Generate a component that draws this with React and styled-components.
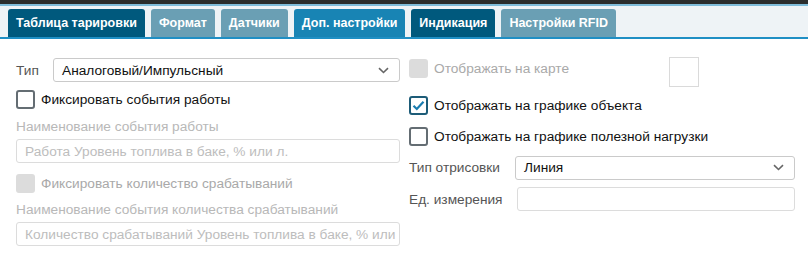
import React from "react";
import styled, { createGlobalStyle } from "styled-components";

const GlobalStyle = createGlobalStyle`
  body {
    margin: 0;
    background: #fff;
    font-family: "Liberation Sans", Arial, sans-serif;
    font-size: 13.7px;
  }
`;

const tabColors = {
  active: "#00597d",
  muted: "#6a9fb4",
  bright: "#1884b4",
};

const Page = styled.div`
  width: 808px;
  height: 258px;
  overflow: hidden;
`;

const TopBar = styled.div`
  height: 4px;
  background: #2b2d2c;
`;

const TabStrip = styled.div`
  display: flex;
  align-items: flex-end;
  gap: 6px;
  padding: 3px 8px 0;
  height: 28px;
  background: #eef3f6;
  border-top: 2px solid #7fbcd9;
  border-bottom: 2px solid #1f8fc4;
`;

const Tab = styled.div`
  height: 28px;
  line-height: 29px;
  padding: 0 8px;
  background: ${({ $kind }) => tabColors[$kind]};
  color: #fff;
  font-weight: bold;
  font-size: 12.5px;
  border-radius: 3px 3px 0 0;
  white-space: nowrap;
`;

const Form = styled.div`
  display: grid;
  grid-template-columns: 384px 386px;
  column-gap: 9px;
  padding: 18px 0 0 16px;
`;

const Column = styled.div`
  display: flex;
  flex-direction: column;
`;

const FieldRow = styled.div`
  display: flex;
  align-items: center;
  height: ${({ $h }) => $h || 24}px;
  margin-top: ${({ $mt }) => $mt || 0}px;
`;

const Label = styled.span`
  width: ${({ $w }) => ($w ? `${$w}px` : "auto")};
  flex: none;
  color: #555;
  white-space: nowrap;
`;

const Caption = styled.div`
  color: #b8b8b8;
  margin-top: ${({ $mt }) => $mt || 0}px;
  height: 16px;
  line-height: 16px;
  white-space: nowrap;
`;

const SelectBox = styled.div`
  flex: 1 1 auto;
  height: 24px;
  box-sizing: border-box;
  border: 1px solid #cacaca;
  border-radius: 3px;
  display: flex;
  align-items: center;
  justify-content: space-between;
  padding: 0 10px 0 8px;
  color: #111;
  background: #fff;
`;

const TextBox = styled.div`
  flex: 1 1 auto;
  height: 24px;
  box-sizing: border-box;
  border: 1px solid #dcdcdc;
  border-radius: 3px;
  display: flex;
  align-items: center;
  padding: 0 8px;
  color: #bdbdbd;
  white-space: nowrap;
  overflow: hidden;
  margin-top: ${({ $mt }) => $mt || 0}px;
`;

const Box = styled.span`
  flex: none;
  width: 19px;
  height: 19px;
  box-sizing: border-box;
  border-radius: 3px;
  border: 2px solid
    ${({ $state }) =>
      $state === "checked" ? "#1d5c78" : $state === "disabled" ? "#dcdcdc" : "#646d73"};
  background: ${({ $state }) => ($state === "disabled" ? "#dcdcdc" : "#fff")};
  display: flex;
  align-items: center;
  justify-content: center;
  margin-right: 6px;
`;

const CheckText = styled.span`
  color: ${({ $disabled }) => ($disabled ? "#a9a9a9" : "#111")};
  white-space: nowrap;
`;

const TopRow = styled.div`
  display: flex;
  align-items: flex-start;
  height: 30px;
`;

const TopCheck = styled.div`
  display: flex;
  align-items: center;
  height: 20px;
  margin-top: 1px;
`;

const Swatch = styled.div`
  width: 30px;
  height: 30px;
  box-sizing: border-box;
  border: 1px solid #dadada;
  margin-left: auto;
  margin-right: 96px;
`;

const Chevron = () => (
  <svg width="11" height="7" viewBox="0 0 11 7">
    <path d="M1 1.2 L5.5 5.5 L10 1.2" fill="none" stroke="#666" strokeWidth="1.6" />
  </svg>
);

const Check = () => (
  <svg width="13" height="11" viewBox="0 0 13 11">
    <path d="M1.5 5.8 L4.8 9 L11.5 1.8" fill="none" stroke="#1a7db0" strokeWidth="2.2" />
  </svg>
);

const Checkbox = ({ state, children }) => (
  <>
    <Box $state={state}>{state === "checked" && <Check />}</Box>
    <CheckText $disabled={state === "disabled"}>{children}</CheckText>
  </>
);

export default function App() {
  return (
    <Page>
      <GlobalStyle />
      <TopBar />
      <TabStrip>
        <Tab $kind="active">Таблица тарировки</Tab>
        <Tab $kind="muted">Формат</Tab>
        <Tab $kind="muted">Датчики</Tab>
        <Tab $kind="bright">Доп. настройки</Tab>
        <Tab $kind="active">Индикация</Tab>
        <Tab $kind="muted">Настройки RFID</Tab>
      </TabStrip>
      <Form>
        <Column>
          <FieldRow $mt={1}>
            <Label $w={37}>Тип</Label>
            <SelectBox>
              <span>Аналоговый/Импульсный</span>
              <Chevron />
            </SelectBox>
          </FieldRow>
          <FieldRow $mt={7} $h={20}>
            <Checkbox state="empty">Фиксировать события работы</Checkbox>
          </FieldRow>
          <Caption $mt={10}>Наименование события работы</Caption>
          <TextBox $mt={4}>Работа Уровень топлива в баке, % или л.</TextBox>
          <FieldRow $mt={10} $h={20}>
            <Checkbox state="disabled">Фиксировать количество срабатываний</Checkbox>
          </FieldRow>
          <Caption $mt={9}>Наименование события количества срабатываний</Caption>
          <TextBox $mt={4}>Количество срабатываний Уровень топлива в баке, % или</TextBox>
        </Column>
        <Column>
          <TopRow>
            <TopCheck>
              <Checkbox state="disabled">Отображать на карте</Checkbox>
            </TopCheck>
            <Swatch />
          </TopRow>
          <FieldRow $mt={8} $h={20}>
            <Checkbox state="checked">Отображать на графике объекта</Checkbox>
          </FieldRow>
          <FieldRow $mt={11} $h={20}>
            <Checkbox state="empty">Отображать на графике полезной нагрузки</Checkbox>
          </FieldRow>
          <FieldRow $mt={9} $h={25}>
            <Label $w={106}>Тип отрисовки</Label>
            <SelectBox>
              <span>Линия</span>
              <Chevron />
            </SelectBox>
          </FieldRow>
          <FieldRow $mt={7}>
            <Label $w={108}>Ед. измерения</Label>
            <TextBox />
          </FieldRow>
        </Column>
      </Form>
    </Page>
  );
}
